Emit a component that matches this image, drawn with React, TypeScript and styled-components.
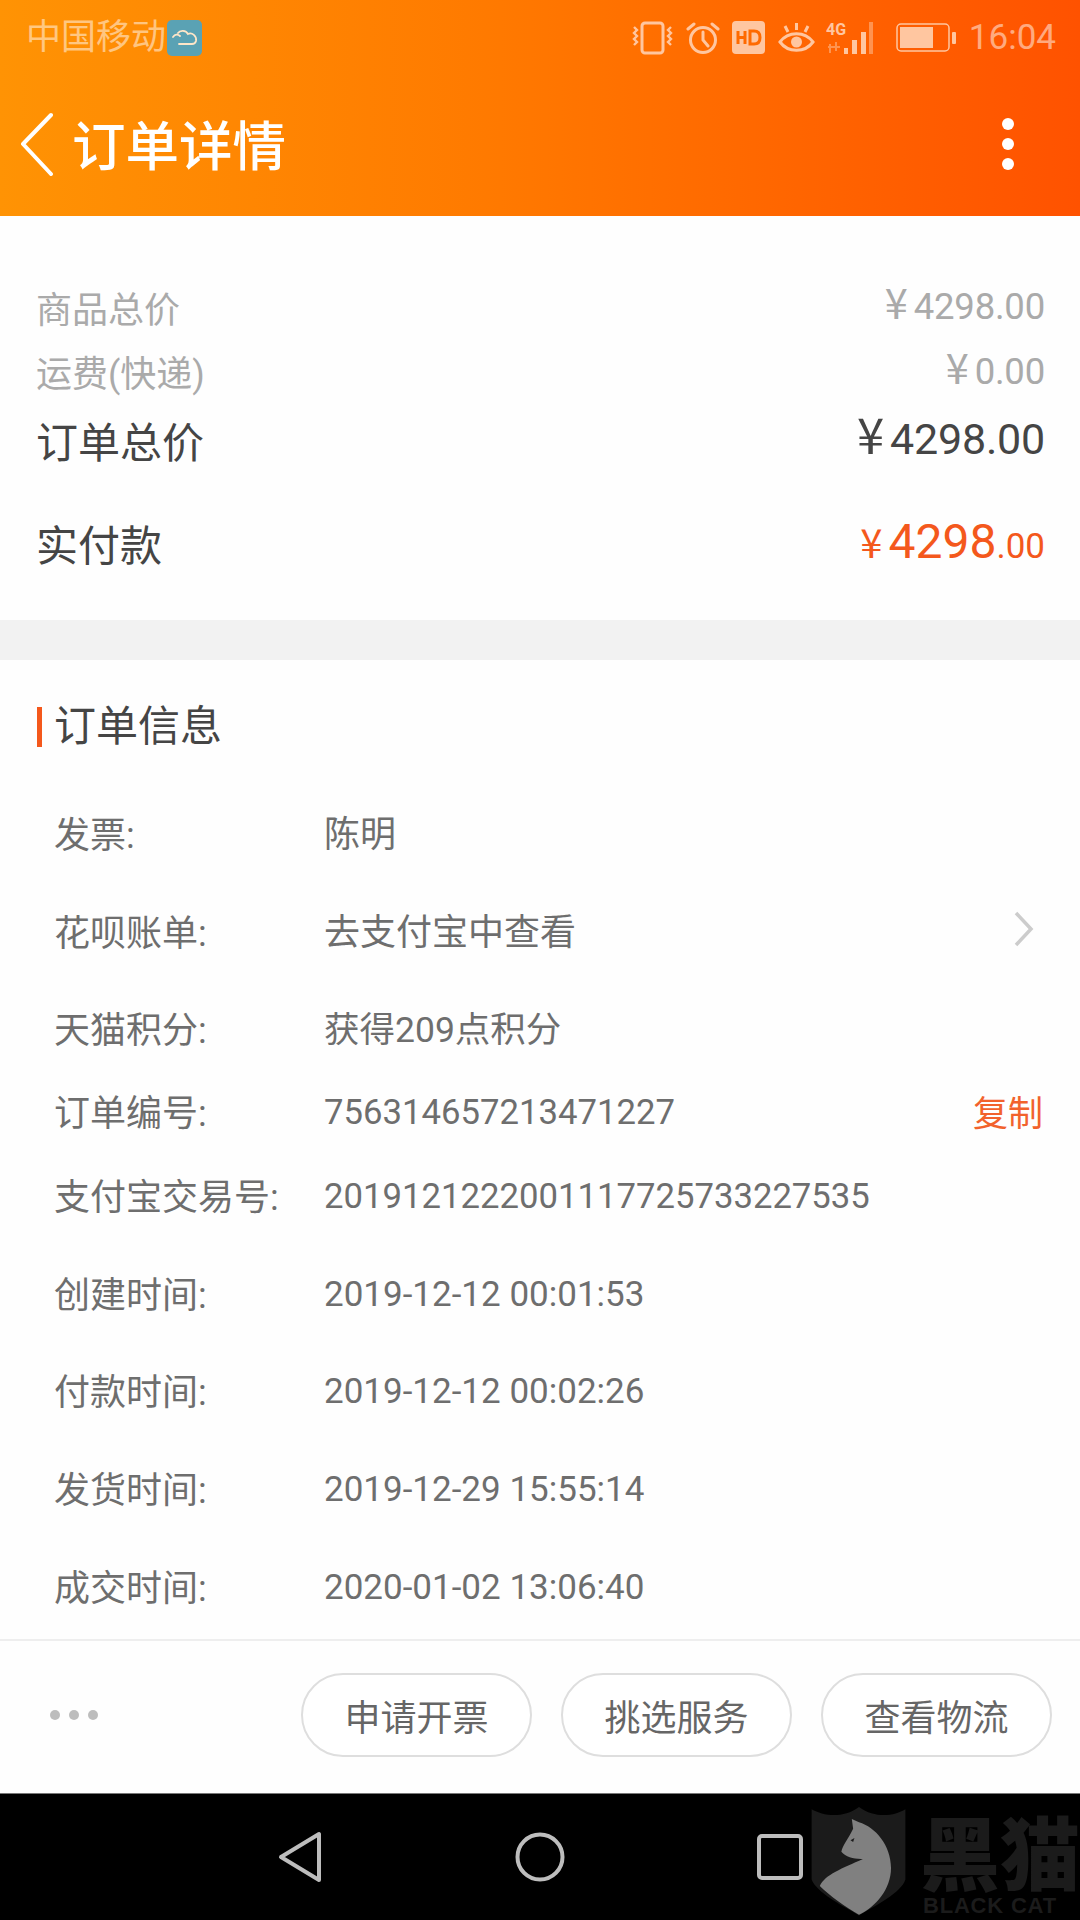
import React from "react";
import styled, { createGlobalStyle } from "styled-components";

const GlobalStyle = createGlobalStyle`
  html, body {
    margin: 0;
    padding: 0;
    background: #fefefe;
  }
  * {
    box-sizing: border-box;
  }
`;

const Page = styled.div`
  position: relative;
  width: 1080px;
  height: 1920px;
  overflow: hidden;
  display: flex;
  flex-direction: column;
  background: #fefefe;
  font-family: Roboto, "Noto Sans CJK SC", sans-serif;
`;

const Header = styled.header`
  height: 216px;
  flex: none;
  background: linear-gradient(90deg, #ff9304 0%, #ff7a00 45%, #ff5200 100%);
`;

const StatusBar = styled.div`
  height: 75px;
  padding: 0 24px 0 26px;
  display: flex;
  align-items: center;
  color: rgba(255, 255, 255, 0.5);
  font-size: 35px;
`;

const Carrier = styled.span`
  line-height: 1;
`;

const CloudBadge = styled.span`
  width: 35px;
  height: 36px;
  margin-left: 1px;
  border-radius: 5px;
  background: #5aa2b4;
  display: flex;
  align-items: center;
  justify-content: center;
`;

const StatusIcons = styled.div`
  margin-left: auto;
  display: flex;
  align-items: center;
`;

const StatusIcon = styled.svg<{ $gap?: number }>`
  display: block;
  margin-right: ${(p) => p.$gap ?? 12}px;
`;

const Clock = styled.span`
  line-height: 1;
`;

const NavBar = styled.div`
  height: 141px;
  padding: 4px 66px 0 20px;
  display: flex;
  align-items: center;
  justify-content: space-between;
`;

const TitleGroup = styled.div`
  display: flex;
  align-items: center;
  gap: 19px;
`;

const BackArrow = styled.svg`
  margin-bottom: 8px;
`;

const Title = styled.h1`
  margin: 0;
  color: #fff;
  font-size: 53.5px;
  font-weight: 500;
  line-height: 1;
`;

const MoreDots = styled.div`
  display: flex;
  flex-direction: column;
  gap: 8px;
  margin-bottom: 8px;
`;

const MoreDot = styled.i`
  display: block;
  width: 12px;
  height: 12px;
  border-radius: 50%;
  background: #fff;
`;

const Main = styled.main`
  flex: 1;
  min-height: 0;
`;

const Summary = styled.section`
  padding: 58px 35px 8px 36px;
  height: 404px;
`;

const SummaryRow = styled.div<{ $h: number; $tone: "muted" | "dark" }>`
  height: ${(p) => p.$h}px;
  display: flex;
  align-items: center;
  justify-content: space-between;
  color: ${(p) => (p.$tone === "muted" ? "#aaaaaa" : "#454545")};
  font-size: ${(p) => (p.$tone === "muted" ? 36 : 42)}px;
`;

const Amount = styled.span<{ $size: number; $lift: number }>`
  font-size: ${(p) => p.$size}px;
  line-height: 1;
  letter-spacing: -0.2px;
  margin-bottom: ${(p) => p.$lift}px;
`;

const Yen = styled.span`
  font-family: "Noto Sans CJK SC", sans-serif;
  font-size: 1.14em;
  margin-right: 6px;
`;

const PaidAmount = styled.span`
  color: #f4581c;
  font-size: 48px;
  line-height: 1;
  display: flex;
  align-items: baseline;
`;

const PaidYen = styled.span`
  font-family: "Noto Sans CJK SC", sans-serif;
  font-size: 40px;
  margin-right: 6px;
`;

const PaidCents = styled.span`
  font-size: 35px;
`;

const Gap = styled.div`
  height: 40px;
  background: #f2f2f2;
`;

const InfoTitle = styled.h2`
  margin: 43px 0 34px 37px;
  height: 48px;
  display: flex;
  align-items: center;
  gap: 12px;
  color: #454545;
  font-size: 42px;
  font-weight: 400;
  line-height: 1;
  &::before {
    content: "";
    width: 5px;
    height: 40px;
    background: #f4581c;
  }
`;

const InfoRow = styled.div<{ $h: number }>`
  height: ${(p) => p.$h}px;
  padding: 0 37px 0 54px;
  display: flex;
  align-items: center;
  color: #6e6e6e;
`;

const InfoLabel = styled.span`
  width: 270px;
  flex: none;
  font-size: 36px;
  margin-bottom: 5px;
`;

const InfoValue = styled.span<{ $size: number; $lift: boolean }>`
  flex: 1;
  font-size: ${(p) => p.$size}px;
  margin-bottom: ${(p) => (p.$lift ? 6 : 0)}px;
`;

const RowArrow = styled.svg`
  margin: 0 9px 6px 0;
`;

const CopyLink = styled.span`
  color: #f2622c;
  font-size: 35px;
  margin-bottom: 4px;
`;

const BottomBar = styled.div`
  height: 154px;
  flex: none;
  border-top: 2px solid #eeeeee;
  padding: 32px 28px 0 50px;
  display: flex;
  align-items: flex-start;
`;

const BarDots = styled.div`
  height: 83px;
  display: flex;
  align-items: center;
  gap: 9px;
  margin-right: auto;
`;

const BarDot = styled.i`
  display: block;
  width: 10px;
  height: 10px;
  border-radius: 50%;
  background: #bdbdbd;
`;

const Actions = styled.div`
  display: flex;
  gap: 29px;
`;

const PillButton = styled.button`
  width: 231px;
  height: 84px;
  padding: 0;
  border: 2px solid #dedede;
  border-radius: 42px;
  background: #fff;
  color: #666;
  font-family: inherit;
  font-size: 36px;
`;

const SystemNav = styled.nav`
  height: 127px;
  flex: none;
  background: #000;
  border-top: 1px solid #777;
  padding: 0 180px;
  display: grid;
  grid-template-columns: repeat(3, 1fr);
  place-items: center;
`;

const Watermark = styled.div`
  position: absolute;
  left: 810px;
  top: 1803px;
  width: 270px;
  height: 117px;
  display: flex;
  gap: 12px;
`;

const WatermarkText = styled.div`
  color: #1b1b1b;
  display: flex;
  flex-direction: column;
  align-items: flex-start;
`;

const WatermarkName = styled.div`
  font-family: "Noto Sans CJK SC", sans-serif;
  font-weight: 900;
  font-size: 80px;
  line-height: 1;
  margin-top: 6px;
  white-space: nowrap;
`;

const WatermarkLatin = styled.div`
  font-family: "Liberation Sans", sans-serif;
  font-weight: 700;
  font-size: 22px;
  line-height: 1;
  margin-top: 6px;
  margin-left: 3px;
  letter-spacing: 0.8px;
  white-space: nowrap;
`;

const info = [
  { label: "发票:", value: "陈明", h: 98, size: 36, lift: true },
  { label: "花呗账单:", value: "去支付宝中查看", h: 98, size: 36, lift: true, arrow: true },
  { label: "天猫积分:", value: "获得209点积分", h: 97, size: 35.5, lift: true },
  { label: "订单编号:", value: "756314657213471227", h: 68, size: 34.7, copy: true },
  { label: "支付宝交易号:", value: "2019121222001117725733227535", h: 100, size: 34.7 },
  { label: "创建时间:", value: "2019-12-12 00:01:53", h: 96, size: 35 },
  { label: "付款时间:", value: "2019-12-12 00:02:26", h: 98, size: 35 },
  { label: "发货时间:", value: "2019-12-29 15:55:14", h: 98, size: 35 },
  { label: "成交时间:", value: "2020-01-02 13:06:40", h: 98, size: 35 },
];

const iconColor = "#ffc6a0";

export default function App() {
  return (
    <Page lang="zh-CN">
      <GlobalStyle />
      <Header>
        <StatusBar>
          <Carrier>中国移动</Carrier>
          <CloudBadge>
            <svg width="28" height="18" viewBox="0 0 28 18" fill="none" stroke="#ffe6c8" strokeWidth="1.8" strokeLinecap="round">
              <path d="M2 8c2-3 5-3 7-1M7 4c2-3 8-3 10 1 4-2 9 2 8 7-.5 2-2 3-4 3H8" />
            </svg>
          </CloudBadge>
          <StatusIcons>
            <StatusIcon width="43" height="34" viewBox="0 0 43 34" fill="none" stroke={iconColor} strokeWidth="3">
              <rect x="11" y="2" width="21" height="30" rx="3" />
              <path d="M3 6l3 3-3 3 3 3-3 3 3 3-3 3M40 6l-3 3 3 3-3 3 3 3-3 3 3 3" strokeWidth="2.4" />
            </StatusIcon>
            <StatusIcon width="34" height="34" viewBox="0 0 34 34" fill="none" stroke={iconColor} strokeWidth="3">
              <circle cx="17" cy="19" r="12.5" />
              <path d="M17 11v8l5 6M2 8l6-5M32 8l-6-5" strokeLinecap="round" />
            </StatusIcon>
            <StatusIcon width="34" height="34" viewBox="0 0 34 34">
              <rect width="33" height="33" rx="4" fill={iconColor} />
              <path d="M6 10v13M13 10v13M6 16.500h7M18 10v13h4c4.500 0 6-3 6-6.500s-1.500-6.500-6-6.500z" fill="none" stroke="#ff6a00" strokeWidth="3" />
            </StatusIcon>
            <StatusIcon width="37" height="32" viewBox="0 0 37 32" fill="none" stroke={iconColor} strokeWidth="3" $gap={11}>
              <path d="M2 20c8-11 25-11 33 0-8 11-25 11-33 0z" />
              <circle cx="18.500" cy="20" r="5.500" fill={iconColor} stroke="none" />
              <path d="M18.500 1v7M7 4l3 6M30 4l-3 6" />
            </StatusIcon>
            <StatusIcon width="54" height="34" viewBox="0 0 54 34" $gap={16}>
              <text x="0" y="14" fontFamily="Roboto, sans-serif" fontSize="16" fontWeight="700" fill={iconColor}>4G</text>
              <path d="M4 23v9M10 21v9M2 26h12" stroke={iconColor} strokeOpacity="0.5" strokeWidth="2" fill="none" />
              <rect x="18" y="27" width="4" height="6" fill={iconColor} />
              <rect x="26" y="19" width="5" height="14" fill={iconColor} />
              <rect x="35" y="11" width="5" height="22" fill={iconColor} />
              <rect x="43" y="1" width="4" height="32" fill={iconColor} fillOpacity="0.5" />
            </StatusIcon>
            <StatusIcon width="61" height="30" viewBox="0 0 61 30" $gap={12}>
              <rect x="1" y="1" width="52" height="27" rx="4" fill="none" stroke={iconColor} strokeWidth="1.500" />
              <rect x="4" y="4" width="33" height="21" fill={iconColor} />
              <rect x="56" y="9" width="4" height="12" rx="1" fill={iconColor} />
            </StatusIcon>
            <Clock>16:04</Clock>
          </StatusIcons>
        </StatusBar>
        <NavBar>
          <TitleGroup>
            <BackArrow width="33" height="64" viewBox="0 0 33 64" fill="none" stroke="#fff" strokeWidth="4" strokeLinecap="round" strokeLinejoin="round">
              <path d="M31 3L3 32l28 30" />
            </BackArrow>
            <Title>订单详情</Title>
          </TitleGroup>
          <MoreDots>
            <MoreDot />
            <MoreDot />
            <MoreDot />
          </MoreDots>
        </NavBar>
      </Header>
      <Main>
        <Summary>
          <SummaryRow $h={65} $tone="muted">
            <span>商品总价</span>
            <Amount $size={36.5} $lift={6}><Yen>¥</Yen>4298.00</Amount>
          </SummaryRow>
          <SummaryRow $h={64} $tone="muted">
            <span>运费(快递)</span>
            <Amount $size={36.5} $lift={6}><Yen>¥</Yen>0.00</Amount>
          </SummaryRow>
          <SummaryRow $h={72} $tone="dark">
            <span>订单总价</span>
            <Amount $size={43} $lift={9}><Yen>¥</Yen>4298.00</Amount>
          </SummaryRow>
          <SummaryRow $h={134} $tone="dark">
            <span>实付款</span>
            <PaidAmount>
              <PaidYen>¥</PaidYen>4298<PaidCents>.00</PaidCents>
            </PaidAmount>
          </SummaryRow>
        </Summary>
        <Gap />
        <InfoTitle>订单信息</InfoTitle>
        {info.map((row) => (
          <InfoRow key={row.label} $h={row.h}>
            <InfoLabel>{row.label}</InfoLabel>
            <InfoValue $size={row.size} $lift={!!row.lift}>{row.value}</InfoValue>
            {row.arrow && (
              <RowArrow width="20" height="36" viewBox="0 0 20 36" fill="none" stroke="#cccccc" strokeWidth="3.500">
                <path d="M2 2l15 16L2 34" />
              </RowArrow>
            )}
            {row.copy && <CopyLink>复制</CopyLink>}
          </InfoRow>
        ))}
      </Main>
      <BottomBar>
        <BarDots>
          <BarDot />
          <BarDot />
          <BarDot />
        </BarDots>
        <Actions>
          <PillButton>申请开票</PillButton>
          <PillButton>挑选服务</PillButton>
          <PillButton>查看物流</PillButton>
        </Actions>
      </BottomBar>
      <SystemNav>
        <svg width="44" height="52" viewBox="0 0 44 52" fill="none" stroke="#bdbdbd" strokeWidth="4" strokeLinejoin="round">
          <path d="M41 3v46L3 26z" />
        </svg>
        <svg width="50" height="50" viewBox="0 0 50 50" fill="none" stroke="#bdbdbd" strokeWidth="4">
          <circle cx="25" cy="25" r="22.500" />
        </svg>
        <svg width="46" height="46" viewBox="0 0 46 46" fill="none" stroke="#bdbdbd" strokeWidth="4">
          <rect x="2" y="2" width="42" height="42" rx="3" />
        </svg>
      </SystemNav>
      <Watermark>
        <svg width="100" height="117" viewBox="90 70 300 350">
          <path d="M95 85C130 105 190 115 240 78 290 115 350 105 382 85V300C370 340 290 380 240 410 190 380 110 340 95 300Z" fill="#1b1b1b" />
          <path d="M218 115L240 125C290 140 338 195 338 265 338 330 290 385 240 408 200 385 150 350 120 320 135 285 190 265 252 237 225 238 200 232 186 215 190 195 205 180 222 145Z" fill="#808080" />
          <path d="M214 180l12-7-4 12z" fill="#1b1b1b" />
        </svg>
        <WatermarkText>
          <WatermarkName>黑猫</WatermarkName>
          <WatermarkLatin>BLACK CAT</WatermarkLatin>
        </WatermarkText>
      </Watermark>
    </Page>
  );
}
